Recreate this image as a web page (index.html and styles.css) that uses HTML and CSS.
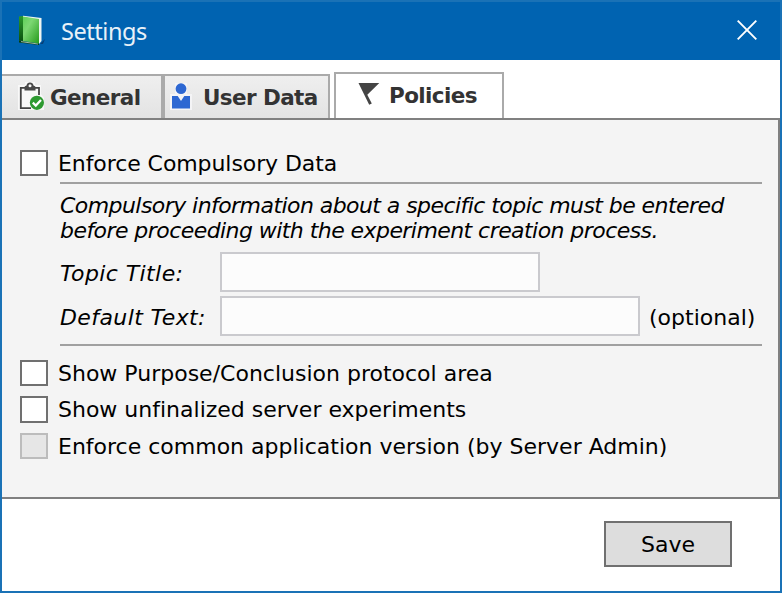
FILE: index.html
```html
<!DOCTYPE html>
<html lang="en">
<head>
<meta charset="utf-8">
<title>Settings</title>
<link rel="stylesheet" href="styles.css">
</head>
<body>
<div class="window">
  <header class="titlebar">
    <svg class="book" width="28" height="32" viewBox="0 0 28 32">
      <defs>
        <linearGradient id="cover" x1="0" y1="0" x2="1" y2="1">
          <stop offset="0" stop-color="#5fd158"/><stop offset=".35" stop-color="#7dd873"/><stop offset="1" stop-color="#259a1b"/>
        </linearGradient>
        <linearGradient id="spine" x1="0" y1="0" x2="0" y2="1">
          <stop offset="0" stop-color="#2b9a2c"/><stop offset="1" stop-color="#0b5210"/>
        </linearGradient>
      </defs>
      <path d="M22 29L27 24L25 29Z" fill="#063f78"/>
      <path d="M1 25.5L21 28.5V30L1 27.5Z" fill="#073d0b"/>
      <path d="M3 26.6L20 29" stroke="#c8d8c9" stroke-width=".8"/>
      <path d="M5 .8L23.5 3V26L21 29V5L5 2Z" fill="#eef5f1"/>
      <path d="M5 1.6L21 4V28.5L5 26Z" fill="url(#cover)"/>
      <path d="M1 1.5L5 1V26L1 25.5Z" fill="url(#spine)"/>
    </svg>
    <h1 class="title">Settings</h1>
    <svg class="close" width="20" height="20" viewBox="0 0 20 20"><path d="M.7 .7L19.3 19.3M19.3 .7L.7 19.3" stroke="#fff" stroke-width="1.9"/></svg>
  </header>
  <nav class="tabs">
    <div class="tab general">
      <svg width="26" height="30" viewBox="0 0 26 30">
        <path d="M0 3H7V0H17V3H23V12L26 16V28H0Z" fill="#f8f8f8"/>
        <path d="M13 26.2H2.8V5.8H21V13" fill="none" stroke="#444" stroke-width="1.8"/>
        <path d="M6.5 8.5V5Q6.5 4 8.5 3.5Q9 .6 12 .6Q15 .6 15.5 3.5Q17.5 4 17.5 5V8.5Z" fill="#484848"/>
        <circle cx="12" cy="3.8" r="1.5" fill="#f8f8f8"/>
        <circle cx="18.9" cy="20.8" r="7.1" fill="#2e9a31"/>
        <path d="M14.8 20.6L17.8 23.6L23 18" fill="none" stroke="#fff" stroke-width="2.2"/>
      </svg>
      <span class="tab-label">General</span>
    </div>
    <div class="tab user">
      <svg width="22" height="28" viewBox="0 0 22 28">
        <path d="M0 12H5V1H17V12H22V28H0Z" fill="#f4f4f6"/>
        <circle cx="11" cy="6.7" r="5.4" fill="#2d67d2"/>
        <path d="M2 14H7.7L11 19L14.3 14H20V26.5H2Z" fill="#2d67d2"/>
      </svg>
      <span class="tab-label">User Data</span>
    </div>
    <div class="tab policies">
      <svg width="22" height="24" viewBox="0 0 22 24"><path d="M.5 1H21.3L9.3 12.8L13.8 21.6L11.2 22.8Z" fill="#444"/></svg>
      <span class="tab-label">Policies</span>
    </div>
  </nav>
  <main class="panel">
    <div class="check-row first"><i class="box"></i><span>Enforce Compulsory Data</span></div>
    <section class="topic">
      <p>Compulsory information about a specific topic must be entered<br>before proceeding with the experiment creation process.</p>
      <div class="field"><label>Topic Title:</label><div class="input short"></div></div>
      <div class="field"><label>Default Text:</label><div class="input long"></div><span class="optional">(optional)</span></div>
    </section>
    <div class="check-row second"><i class="box"></i><span>Show Purpose/Conclusion protocol area</span></div>
    <div class="check-row third"><i class="box tall"></i><span>Show unfinalized server experiments</span></div>
    <div class="check-row"><i class="box disabled"></i><span>Enforce common application version (by Server Admin)</span></div>
  </main>
  <footer class="footer"><button class="save">Save</button></footer>
</div>
</body>
</html>
```
FILE: styles.css
```css
* { box-sizing: border-box; }
body { margin: 0; }
.window {
  width: 782px; height: 593px;
  display: flex; flex-direction: column;
  border: 2px solid #1a72b6;
  background: #fff; color: #000;
  font: 22px/26px "DejaVu Sans", sans-serif;
  font-variant-ligatures: none;
  white-space: nowrap;
}
.titlebar { height: 58px; display: flex; background: #0063b1; flex: none; }
.book { margin: 13px 0 0 16px; }
.title { margin: 12px 0 0 15px; flex: 1; color: #e8f1f8; font: 400 23.5px/34px "Noto Sans", sans-serif; letter-spacing: -.45px; }
.close { margin: 18px 23px 0 0; }
.tabs { height: 60px; display: flex; align-items: flex-end; border-bottom: 2px solid #808080; flex: none; }
.tab { height: 44px; display: flex; border: 2px solid #aaa; border-bottom: 0; background: linear-gradient(#efefef, #e3e3e3); color: #333; font-size: 21.5px; font-weight: bold; letter-spacing: -.6px; }
.tab svg { flex: none; }
.tab-label { margin-top: 9px; }
.general { width: 161px; border-left: 0; }
.general svg { margin: 6px 6px 0 16px; }
.user { width: 167px; }
.user svg { margin: 6px 11px 0 5px; }
.policies { width: 170px; height: 46px; margin-left: 4px; background: #fff; }
.policies svg { margin: 8px 9px 0 22px; }
.panel { height: 379px; padding: 30px 16px 0 18px; border-right: 2px solid #808080; border-bottom: 2px solid #808080; background: #f4f4f4; flex: none; }
.check-row { display: flex; height: 26px; gap: 10px; }
.check-row span { padding-top: 1px; }
.first span { letter-spacing: -.08px; }
.box { width: 28px; height: 26px; flex: none; border: 2px solid #707070; background: #fff; }
.box.tall { height: 27px; }
.box.disabled { border-color: #bcbcbc; background: #e6e6e6; }
.topic { height: 164px; margin: 6px 0 14px 40px; border: solid #a0a0a0; border-width: 2px 0; font-style: italic; }
.topic p { margin: 9px 0; line-height: 25px; letter-spacing: -.56px; }
.field { display: flex; align-items: center; height: 40px; margin-bottom: 4px; }
.field label { width: 160px; padding-top: 3px; letter-spacing: .4px; }
.input { height: 40px; border: 2px solid #cacace; background: #fcfcfc; }
.short { width: 320px; }
.long { width: 420px; }
.optional { margin: 3px 0 0 9px; font-style: normal; }
.second { margin-bottom: 10px; }
.third { margin-bottom: 11px; }
.footer { display: flex; justify-content: flex-end; padding: 22px 48px 0 0; }
.save { width: 128px; height: 46px; padding: 2px 0 0; border: 2px solid #707070; border-radius: 0; background: #ddd; color: #000; font: inherit; }
```
